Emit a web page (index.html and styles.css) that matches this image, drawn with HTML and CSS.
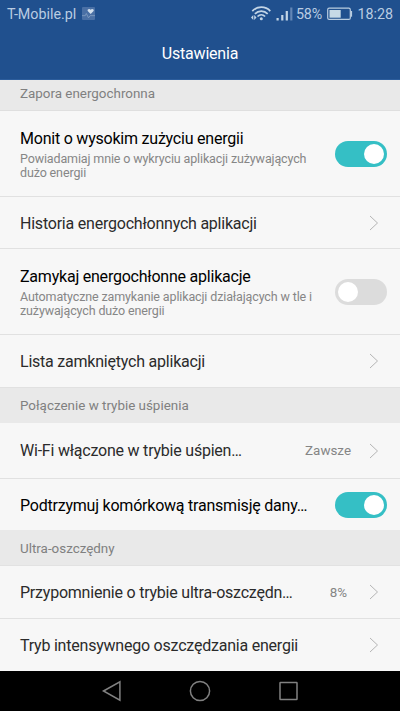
FILE: index.html
```html
<!DOCTYPE html>
<html lang="pl">
<head>
<meta charset="utf-8">
<title>Ustawienia</title>
<link rel="stylesheet" href="styles.css">
</head>
<body>
<svg class="defs" width="0" height="0">
  <symbol id="chevron" viewBox="0 0 10 16"><path d="M1 1l7.500 7L1 15"/></symbol>
</svg>
<div class="screen">
  <header class="header">
    <div class="status">
      <span class="carrier">T-Mobile.pl</span>
      <svg class="health" width="13" height="13" viewBox="0 0 12 12">
        <rect width="12" height="12" rx="1" fill="#4a70a5"/>
        <path d="M0 8h3l1-2 2 4 1.500-2H12" fill="none" stroke="#7f9cc2" stroke-width=".8"/>
        <path d="M8 6.500L5.300 3.800C4.500 2 7 1 8 2.600 9 1 11.500 2 10.700 3.800z" fill="#d3e0ed"/>
      </svg>
      <svg class="wifi" width="20" height="15" viewBox="0 0 20 15">
        <g fill="none" stroke="#c3d5e6" stroke-width="1.700">
          <path d="M1.300 5.100C6-.1 14.600-.1 19.300 5.100M3.900 7.800c3.500-3.700 9.300-3.700 12.800 0M6.500 10.500c2.200-2.200 5.400-2.200 7.600 0"/>
        </g>
        <circle cx="10.300" cy="12.700" r="1.500" fill="#c3d5e6"/>
        <path d="M0 11.500L2.300 9v5zM5.500 11.500L3.200 9v5z" fill="#c3d5e6"/>
      </svg>
      <svg class="signal" width="17" height="14" viewBox="0 0 17 14">
        <path d="M.5 11h2.200v2.500H.5zM5.200 8h2.200v5.500H5.200zM9.700 4h2.200v9.500H9.700z" fill="#c3d5e6"/>
        <path d="M14.200.5h2.200v13h-2.200z" fill="#6386b5"/>
      </svg>
      <span class="percent">58%</span>
      <svg class="battery" width="26" height="14" viewBox="0 0 26 14">
        <rect x=".7" y="1.200" width="22.600" height="11.200" rx="1.500" fill="none" stroke="#b9cde0" stroke-width="1.200"/>
        <path d="M2.500 3h11.200v7.700H2.500z" fill="#c6dae6"/>
        <path d="M23.500 4h1.600v5.700h-1.600z" fill="#b9cde0"/>
      </svg>
      <span class="clock">18:28</span>
    </div>
    <h1 class="title">Ustawienia</h1>
  </header>
  <main class="list">
    <h2 class="section first">Zapora energochronna</h2>
    <div class="row tall">
      <div class="text"><div class="label strong">Monit o wysokim zużyciu energii</div>
      <div class="hint">Powiadamiaj mnie o wykryciu aplikacji zużywających<br>dużo energii</div></div>
      <span class="switch on"></span>
    </div>
    <div class="row h52"><div class="text label single">Historia energochłonnych aplikacji</div><svg class="chevron"><use href="#chevron"/></svg></div>
    <div class="row tall">
      <div class="text"><div class="label strong">Zamykaj energochłonne aplikacje</div>
      <div class="hint">Automatyczne zamykanie aplikacji działających w tle i<br>zużywających dużo energii</div></div>
      <span class="switch"></span>
    </div>
    <div class="row h53"><div class="text label single">Lista zamkniętych aplikacji</div><svg class="chevron"><use href="#chevron"/></svg></div>
    <h2 class="section">Połączenie w trybie uśpienia</h2>
    <div class="row h56"><div class="text label">Wi-Fi włączone w trybie uśpien…</div><span class="value">Zawsze</span><svg class="chevron"><use href="#chevron"/></svg></div>
    <div class="row h51 plain"><div class="text label single strong">Podtrzymuj komórkową transmisję dany…</div><span class="switch on"></span></div>
    <h2 class="section last">Ultra-oszczędny</h2>
    <div class="row h53"><div class="text label single">Przypomnienie o trybie ultra-oszczędn…</div><span class="value pct">8%</span><svg class="chevron"><use href="#chevron"/></svg></div>
    <div class="row h52 plain"><div class="text label single">Tryb intensywnego oszczędzania energii</div><svg class="chevron"><use href="#chevron"/></svg></div>
  </main>
  <nav class="nav">
    <svg width="20" height="22" viewBox="0 0 20 22"><path d="M2.500 11L18.900 1.800v18.400z"/></svg>
    <svg width="22" height="22" viewBox="0 0 22 22"><circle cx="11" cy="11" r="9.600"/></svg>
    <svg width="20" height="22" viewBox="0 0 20 22"><rect x="1" y="2.500" width="17" height="17" rx=".5"/></svg>
  </nav>
</div>
</body>
</html>
```
FILE: styles.css
```css
* { box-sizing: border-box; }
body { margin: 0; font-family: Roboto, sans-serif; background: #f7f7f7; }
.defs { display: block; height: 0; }
.screen { width: 400px; height: 711px; display: flex; flex-direction: column; overflow: hidden; }
.header { height: 80px; background: #20508e; border-bottom: 1px solid #2c5d9c; }
.status { display: flex; align-items: center; height: 27px; padding: 0 7px; color: #b9cce2; font-size: 14.300px; white-space: nowrap; }
.status svg { flex: none; }
.carrier { width: 75px; }
.wifi { margin-left: 156px; }
.signal { margin-left: 5px; }
.percent { margin-left: 3px; width: 30px; letter-spacing: -0.200px; }
.battery { margin-left: 1px; }
.clock { margin-left: auto; }
.title { margin: 0; height: 54px; line-height: 54px; text-align: center; font-size: 16px; letter-spacing: -0.200px; font-weight: 400; color: #fff; }
.section { margin: 0; height: 35px; padding: 0 20px; line-height: 35px; background: #e9e9e9; font-size: 13.400px; font-weight: 400; color: #808080; white-space: nowrap; }
.section.first { height: 31px; line-height: 28px; border-bottom: 1px solid #dfdfdf; }
.section.last { height: 36px; line-height: 37px; border-bottom: 1px solid #e2e2e2; }
.row { display: flex; align-items: center; padding: 0 13px 0 20px; border-bottom: 1px solid #e1e1e1; background: #f7f7f7; }
.row.plain { border-bottom: 0; }
.tall { height: 86px; }
.h51 { height: 51px; }
.h52 { height: 52px; }
.h53 { height: 53px; }
.h56 { height: 56px; }
.text { flex: 1; min-width: 0; white-space: nowrap; }
.label { font-size: 16px; letter-spacing: -0.220px; line-height: 20px; color: #2b2b2b; }
.single { padding-top: 2px; }
.tall .text { padding-top: 2px; }
.strong { color: #000; }
.hint { margin-top: 3px; font-size: 12.500px; letter-spacing: -0.130px; line-height: 14.500px; color: #868686; }
.value { margin-right: 18px; font-size: 13.400px; color: #858585; }
.pct { margin-right: 22px; }
.chevron { flex: none; width: 10px; height: 16px; margin-right: 8px; fill: none; stroke: #b5b5b5; stroke-width: 1; }
.switch { flex: none; width: 52px; height: 26px; padding: 3px; border-radius: 13px; background: #dcdcdc; display: flex; }
.switch::before { content: ""; width: 20px; height: 20px; border-radius: 50%; background: #fff; }
.switch.on { background: #35bfc5; justify-content: flex-end; }
.nav { height: 40px; background: #000; display: flex; justify-content: center; align-items: center; gap: 68px; }
.nav svg { fill: none; stroke: #818181; stroke-width: 1.500; }
```
